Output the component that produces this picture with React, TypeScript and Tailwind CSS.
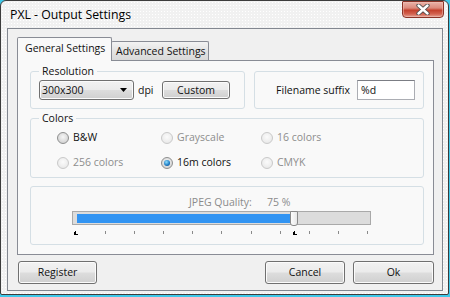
import React from "react";

function Btn({ children, className }: { children: React.ReactNode; className: string }) {
  return (
    <div
      className={`flex items-center justify-center rounded-[3px] border border-[#707070] bg-[linear-gradient(#f2f2f2_0%,#ebebeb_48%,#dddddd_52%,#cfcfcf_100%)] shadow-[inset_0_0_0_1px_#fbfbfb] text-[#111] ${className}`}
    >
      {children}
    </div>
  );
}

function Radio({ label, checked, disabled }: { label: string; checked?: boolean; disabled?: boolean }) {
  return (
    <div className="flex items-center h-[15px]">
      <div
        className={
          disabled
            ? "w-[12px] h-[12px] rounded-full border border-[#c9c9c9] bg-[radial-gradient(circle_at_50%_40%,#fbfbfb,#e4e4e4)] flex items-center justify-center"
            : "w-[12px] h-[12px] rounded-full border border-[#8e8f8f] bg-[radial-gradient(circle_at_50%_40%,#f6f6f6,#c8c8c8)] flex items-center justify-center"
        }
      >
        {checked ? (
          <div className="w-[6px] h-[6px] rounded-full bg-[radial-gradient(circle_at_40%_35%,#8fe0ff,#1a78c2_60%,#0c3f73)]" />
        ) : null}
      </div>
      <span className={disabled ? "ml-[4px] text-[#8d8d8d]" : "ml-[4px] text-[#111]"}>{label}</span>
    </div>
  );
}

function Marker() {
  return (
    <svg width="4" height="4" viewBox="0 0 4 4" className="block">
      <path d="M0 1 L2 1 L2 3 L4 3 L4 4 L0 4 Z" fill="#000" />
      <rect x="1" y="0" width="1" height="4" fill="#000" />
    </svg>
  );
}

export default function App() {
  const ticks = Array.from({ length: 11 }, (_, i) => i);
  return (
    <div className="w-[450px] h-[297px] bg-[#3ec9ea] font-['Open_Sans','Noto_Sans',sans-serif] text-[10.5px] leading-[15px] text-[#111] whitespace-nowrap">
      <div className="w-[449px] h-[295px] flex flex-col border border-[#3c3c3c] rounded-t-[6px] rounded-b-[2px] bg-[#f1f1f1] bg-[radial-gradient(#ffffff_0.7px,transparent_0.8px)] bg-[size:3px_3px]">
        {/* Title bar */}
        <div className="h-[27px] flex items-start justify-between">
          <span className="ml-[9px] mt-[6px] text-[12.3px] leading-[16px] text-black">PXL - Output Settings</span>
          <div className="mr-[4px] w-[42px] h-[17px] rounded-b-[4px] rounded-t-[1px] border border-[#8b3327] bg-[linear-gradient(#eab3a9_0%,#dc8a7c_40%,#c4402c_55%,#d3624f_80%,#e6a193_100%)] shadow-[inset_0_0_0_1px_#f0c4ba80] flex items-center justify-center">
            <svg width="14" height="11" viewBox="0 0 14 11">
              <path d="M2.5 1.5 L11.5 9.5 M11.5 1.5 L2.5 9.5" stroke="#4a4a4a" strokeWidth="4.2" strokeLinecap="round" />
              <path d="M2.5 1.5 L11.5 9.5 M11.5 1.5 L2.5 9.5" stroke="#ffffff" strokeWidth="2.4" strokeLinecap="round" />
            </svg>
          </div>
        </div>

        {/* Client */}
        <div className="ml-[6px] mr-[5px] h-[263px] flex-none border border-[#828790] bg-[#f0f0f0] flex flex-col pl-[9px] pr-[8px] pt-[8px] pb-[6px]">
          {/* Tabs */}
          <div className="h-[24px] flex items-end -mb-[1px] relative z-10">
            <div className="w-[95px] h-[24px] border border-b-0 border-[#898c95] rounded-t-[2px] bg-[#f9f9f9] pl-[7px] pt-[3px] relative z-10">
              General Settings
            </div>
            <div className="-ml-[1px] mb-[1px] w-[98px] h-[19px] border border-b-0 border-[#898c95] rounded-t-[2px] bg-[linear-gradient(#f3f3f3,#e3e3e3_50%,#d9d9d9)] pl-[4px] pt-[2px]">
              Advanced Settings
            </div>
          </div>

          {/* Panel */}
          <div className="h-[195px] border border-[#898c95] bg-[#f9f9f9] pl-[12px] pr-[9px] pt-[3px] flex flex-col">
            {/* Row 1 */}
            <div className="flex gap-[9px]">
              <fieldset className="w-[215px] border border-[#d5dfe5] rounded-[3px] px-[8px] pb-[8px]">
                <legend className="px-[3px] h-[15px]">Resolution</legend>
                <div className="flex items-center mt-[1px]">
                  <div className="w-[95px] h-[20px] rounded-[3px] border border-[#707070] bg-[linear-gradient(#f2f2f2_0%,#ebebeb_48%,#dddddd_52%,#cfcfcf_100%)] shadow-[inset_0_0_0_1px_#fbfbfb] flex items-center justify-between pl-[2px] pr-[6px]">
                    <span>300x300</span>
                    <svg width="7" height="4" viewBox="0 0 7 4">
                      <path d="M0 0 L7 0 L3.5 4 Z" fill="#000" />
                    </svg>
                  </div>
                  <span className="ml-[4px] w-[24px]">dpi</span>
                  <Btn className="w-[68px] h-[18px]">Custom</Btn>
                </div>
              </fieldset>
              <div className="w-[170px] mt-[7px] border border-[#d5dfe5] rounded-[3px] flex items-center justify-end pr-[8px]">
                <span>Filename suffix</span>
                <div className="ml-[7px] w-[58px] h-[20px] border border-[#abadb3] border-t-[#7b7d84] bg-white pl-[3px] flex items-center">
                  %d
                </div>
              </div>
            </div>

            {/* Colors */}
            <fieldset className="mt-[2px] border border-[#d5dfe5] rounded-[3px] px-[8px] pb-[7px]">
              <legend className="px-[3px] h-[15px]">Colors</legend>
              <div className="ml-[18px] mt-[4px] grid grid-cols-[104px_100px_1fr] gap-y-[10px]">
                <Radio label="B&W" />
                <Radio label="Grayscale" disabled />
                <Radio label="16 colors" disabled />
                <Radio label="256 colors" disabled />
                <Radio label="16m colors" checked />
                <Radio label="CMYK" disabled />
              </div>
            </fieldset>

            {/* JPEG */}
            <div className="mt-[8px] h-[59px] border border-[#d5dfe5] rounded-[3px] pt-[8px] flex flex-col">
              <div className="ml-[158px] flex text-[#8b8b8b]">
                <span className="w-[78px]">JPEG Quality:</span>
                <span>75 %</span>
              </div>
              <div className="ml-[41px] mt-[1px] w-[299px] h-[14px] border border-[#a9a9a9] bg-[#dcdcdc] relative">
                <div className="ml-[4px] mt-[2px] w-[214px] h-[9px] bg-[#3294f2]" />
                <div className="absolute left-[217px] -top-[1px] w-[8px] h-[15px] rounded-b-[3px] rounded-t-[1px] border border-[#8a8a8a] bg-[linear-gradient(90deg,#fdfdfd,#e8e8e8)]" />
              </div>
              <div className="ml-[45px] mt-[6px] w-[292px] h-[4px] flex justify-between items-start relative">
                {ticks.map((i) => (
                  <div key={i} className={i === 0 ? "w-[1px] h-[3px] bg-transparent" : "w-[1px] h-[3px] bg-[#8a8a8a]"} />
                ))}
                <div className="absolute -left-[2px] top-0">
                  <Marker />
                </div>
                <div className="absolute left-[217px] top-0">
                  <Marker />
                </div>
              </div>
            </div>
          </div>

          {/* Buttons */}
          <div className="mt-[6px] flex items-center">
            <Btn className="ml-[1px] w-[79px] h-[23px]">Register</Btn>
            <div className="flex-1" />
            <Btn className="w-[80px] h-[23px]">Cancel</Btn>
            <Btn className="ml-[8px] w-[81px] h-[23px]">Ok</Btn>
          </div>
        </div>
      </div>
    </div>
  );
}
